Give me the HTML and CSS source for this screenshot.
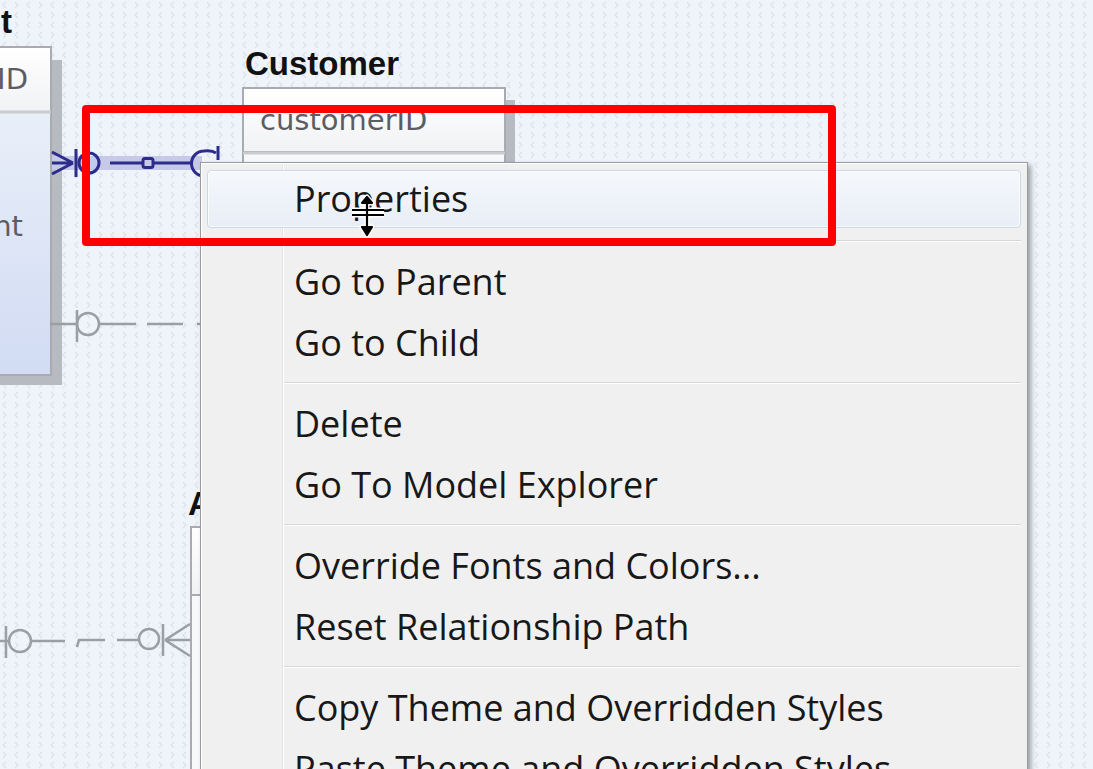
FILE: index.html
```html
<!DOCTYPE html>
<html>
<head>
<meta charset="utf-8">
<title>ER diagram context menu</title>
<link rel="stylesheet" href="styles.css">
</head>
<body>
<div class="stage">
  <svg class="canvas" width="1093" height="769" viewBox="0 0 1093 769" xmlns="http://www.w3.org/2000/svg">
    <defs>
      <pattern id="bg" width="24" height="20" patternUnits="userSpaceOnUse">
        <rect width="24" height="20" fill="#eef4fa"/>
        <path d="M6 2 L3 5 L6 8 M15 2 L18 5 L15 8 M3 12 L6 15 L3 18 M18 12 L15 15 L18 18" fill="none" stroke="#dce2e9" stroke-width="1.2"/>
      </pattern>
      <linearGradient id="body" x1="0" y1="0" x2="0" y2="1">
        <stop offset="0" stop-color="#e9eff9"/>
        <stop offset="1" stop-color="#d1dbf3"/>
      </linearGradient>
      <linearGradient id="head" x1="0" y1="0" x2="0" y2="1">
        <stop offset="0" stop-color="#ffffff"/>
        <stop offset="1" stop-color="#f1f2f4"/>
      </linearGradient>
    </defs>
    <rect width="1093" height="769" fill="url(#bg)"/>

    <!-- left entity -->
    <rect x="52" y="60" width="10" height="325" fill="#b7bac0"/>
    <rect x="-10" y="375" width="72" height="10" fill="#b7bac0"/>
    <rect x="-10" y="47" width="61" height="65" fill="url(#head)" stroke="#a9abb0" stroke-width="2"/>
    <rect x="-10" y="112" width="61" height="263" fill="url(#body)" stroke="#a9abb0" stroke-width="2"/>
    <line x1="-10" y1="112" x2="51" y2="112" stroke="#c9cbd0" stroke-width="3"/>
    <text class="etitle" x="12" y="33" text-anchor="end">Payment</text>
    <text class="attr" x="28" y="89" text-anchor="end">paymentID</text>
    <text class="attr" x="23" y="236" text-anchor="end">amount</text>

    <!-- customer entity -->
    <rect x="505" y="100" width="10" height="80" fill="#b7bac0"/>
    <rect x="243" y="88" width="262" height="64" fill="url(#head)" stroke="#a9abb0" stroke-width="2"/>
    <rect x="243" y="152" width="262" height="30" fill="#f7f8fa" stroke="#a9abb0" stroke-width="2"/>
    <line x1="243" y1="153" x2="505" y2="153" stroke="#c9cbd0" stroke-width="3"/>
    <text class="etitle" x="245" y="75">Customer</text>
    <text class="attr" x="260" y="130">customerID</text>

    <!-- lower entity (mostly hidden behind the menu) -->
    <rect x="191" y="527" width="200" height="68" fill="url(#head)" stroke="#a9abb0" stroke-width="2"/>
    <rect x="191" y="595" width="200" height="200" fill="#f7f8fa" stroke="#a9abb0" stroke-width="2"/>
    <text class="etitle" x="188" y="515">A</text>

    <!-- selected blue relationship -->
    <rect x="52" y="156" width="150" height="14" fill="#c7c9e9"/>
    <g fill="none" stroke="#2c2c8c" stroke-width="3">
      <path d="M52 152 L73 163 M52 163 L73 163 M52 174 L73 163"/>
      <path d="M76 149 L76 177"/>
      <circle cx="89" cy="163" r="10"/>
      <path d="M110 163 L143 163 M154 163 L192 163"/>
      <rect x="143" y="158.5" width="10" height="9" rx="2"/>
      <path d="M204 176 A12 12 0 0 1 204 151 Q212 150 216 153"/>
      <path d="M218 146 L218 160"/>
    </g>

    <!-- gray relationship upper -->
    <g fill="none" stroke="#9b9ea3" stroke-width="2.5">
      <path d="M50 324 L77 324"/>
      <path d="M77 310 L77 342"/>
      <circle cx="88" cy="324" r="11"/>
      <path d="M99 324 L136 324 M147 324 L183 324 M197 324 L205 324"/>
    </g>

    <!-- gray relationship lower -->
    <g fill="none" stroke="#9b9ea3" stroke-width="2.5">
      <path d="M0 641 L9 641"/>
      <path d="M6 626 L6 658"/>
      <circle cx="20" cy="641" r="11"/>
      <path d="M31 641 L65 641 M77 647 L79 640 L105 640 M117 640 L139 640"/>
      <circle cx="149" cy="639" r="10"/>
      <path d="M163 624 L163 656"/>
      <path d="M165 640 L190 624 M165 640 L190 640 M165 640 L190 656"/>
    </g>
  </svg>

  <div class="menu">
    <div class="item hl">Properties</div>
    <div class="sep"></div>
    <div class="item">Go to Parent</div>
    <div class="item">Go to Child</div>
    <div class="sep"></div>
    <div class="item">Delete</div>
    <div class="item">Go To Model Explorer</div>
    <div class="sep"></div>
    <div class="item">Override Fonts and Colors...</div>
    <div class="item">Reset Relationship Path</div>
    <div class="sep"></div>
    <div class="item">Copy Theme and Overridden Styles</div>
    <div class="item">Paste Theme and Overridden Styles</div>
  </div>

  <div class="redbox"></div>

  <svg class="cursor" width="48" height="50" viewBox="0 0 48 50" xmlns="http://www.w3.org/2000/svg">
    <g stroke="#ffffff" stroke-width="5" fill="none" stroke-linejoin="round">
      <path d="M19 4 L14 10 L24 10 Z M19 10 L19 40 M4 17 L36 17 M4 22 L36 22 M14 34 L24 34 L19 42 Z"/>
    </g>
    <g stroke="#000000" stroke-width="2.2" fill="#000000" stroke-linejoin="round">
      <path d="M19 4 L14 10 L24 10 Z"/>
      <path d="M19 10 L19 36" fill="none"/>
      <path d="M4 17 L36 17 M4 22 L36 22" fill="none"/>
      <path d="M14 34 L24 34 L19 42 Z"/>
    </g>
  </svg>
</div>
</body>
</html>
```
FILE: styles.css
```css
html, body {
  margin: 0;
  padding: 0;
  background: #eef4fa;
}

.stage {
  position: relative;
  width: 1093px;
  height: 769px;
  overflow: hidden;
}

.canvas {
  display: block;
}

.etitle {
  font-family: "Liberation Sans", Arial, sans-serif;
  font-weight: bold;
  font-size: 33px;
  fill: #111111;
}

.attr {
  font-family: "DejaVu Sans", sans-serif;
  font-size: 29px;
  fill: #5c5d62;
}

.menu {
  position: absolute;
  left: 200px;
  top: 162px;
  width: 828px;
  height: 720px;
  box-sizing: border-box;
  border: 1px solid #979a9e;
  background: #f0f0f0;
  box-shadow: 3px 3px 5px rgba(0, 0, 0, 0.35), inset 1px 1px 0 #ffffff;
  padding: 7px 6px 0 6px;
  font-family: "Open Sans", "Noto Sans", sans-serif;
  font-size: 36px;
  color: #181818;
}

.menu::before {
  content: "";
  position: absolute;
  left: 81px;
  top: 2px;
  bottom: 0;
  width: 1px;
  background: #e2e3e3;
  box-shadow: 1px 0 0 #ffffff;
}

.item {
  position: relative;
  height: 61px;
  line-height: 61px;
  padding-left: 87px;
  white-space: nowrap;
}

.item.hl {
  height: 56px;
  line-height: 56px;
  margin-bottom: 3px;
  padding-left: 86px;
  border: 1px solid #cbd8e8;
  border-radius: 4px;
  background: linear-gradient(#f5f8fc, #e8eef6);
  box-shadow: inset 0 0 0 1px rgba(255, 255, 255, 0.7);
}

.sep {
  position: relative;
  height: 20px;
  margin-left: 77px;
}

.sep::after {
  content: "";
  position: absolute;
  left: 0;
  right: 0;
  top: 9px;
  height: 1px;
  background: #d7d7d7;
  box-shadow: 0 1px 0 #ffffff;
}

.redbox {
  position: absolute;
  left: 82px;
  top: 105px;
  width: 754px;
  height: 141px;
  box-sizing: border-box;
  border: 8px solid #ff0000;
  border-radius: 4px;
}

.cursor {
  position: absolute;
  left: 348px;
  top: 193px;
}
```
